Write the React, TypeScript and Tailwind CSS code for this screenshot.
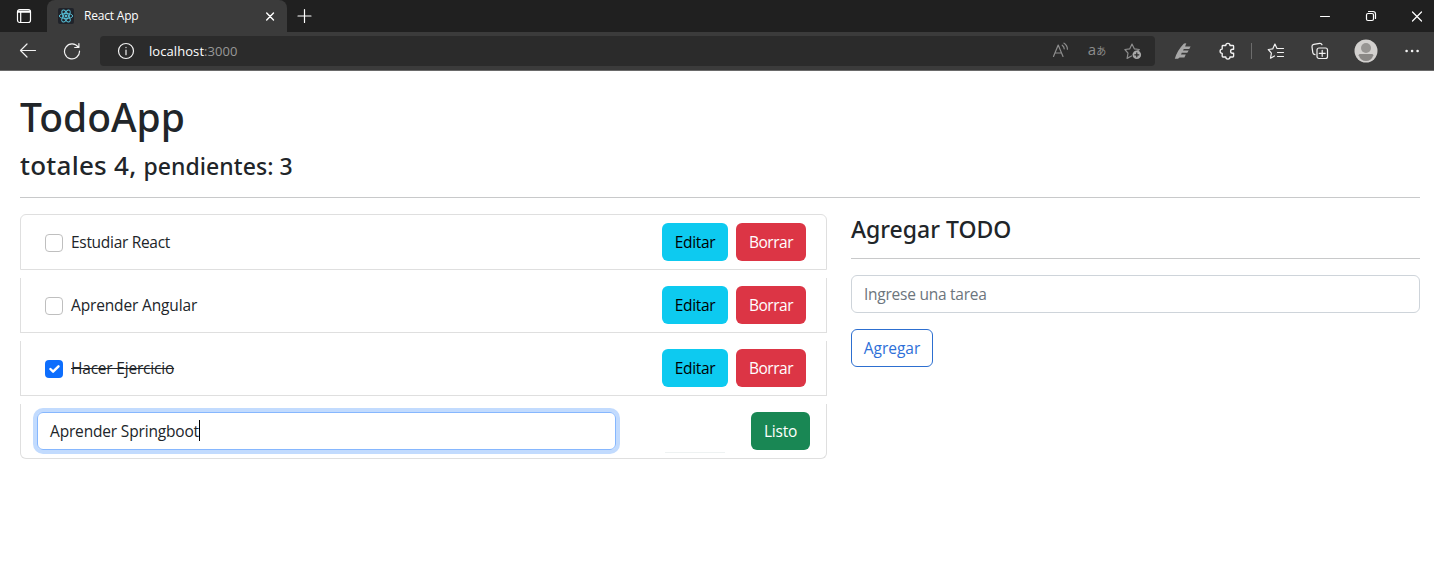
import type { ReactNode } from "react";

const line = { fill: "none", stroke: "currentColor", strokeWidth: 1.2, strokeLinecap: "round", strokeLinejoin: "round" } as const;

function Icon({ size = 18, children, className = "" }: { size?: number; children: ReactNode; className?: string }) {
  return (
    <svg width={size} height={size} viewBox={`0 0 ${size} ${size}`} className={`block shrink-0 ${className}`} {...line}>
      {children}
    </svg>
  );
}

function TabStrip() {
  return (
    <div className="flex h-8 bg-[#202020] text-white">
      <div className="flex w-[47px] items-center pl-4">
        <Icon size={16}>
          <rect x="1.5" y="1.5" width="13" height="13" rx="2.2" />
          <path d="M1.5 4.2h13M2 3h12M4.7 4.5v10" />
        </Icon>
      </div>
      <div className="flex h-8 w-60 items-center rounded-t-lg bg-[#3b3b3b] pl-[11px] pr-[10px]">
        <svg width="16" height="16" viewBox="0 0 16 16" className="block rounded-[2px] bg-[#20232a]" fill="none" stroke="#58c4dc" strokeWidth="0.9">
          <ellipse cx="8" cy="8" rx="6.7" ry="2.6" />
          <ellipse cx="8" cy="8" rx="6.7" ry="2.6" transform="rotate(60 8 8)" />
          <ellipse cx="8" cy="8" rx="6.7" ry="2.6" transform="rotate(120 8 8)" />
          <circle cx="8" cy="8" r="1" fill="#58c4dc" />
        </svg>
        <span className="ml-[10px] grow text-[12px] leading-4 tracking-[-0.2px]">React App</span>
        <Icon size={14}>
          <path d="M3.7 4l6.8 7M10.5 4l-6.8 7" strokeWidth="1.4" />
        </Icon>
      </div>
      <div className="flex grow items-center pl-[10px]">
        <Icon size={16}>
          <path d="M7.5 1.5v13M1 8h13" />
        </Icon>
      </div>
      <div className="flex items-center gap-8 pr-[10px]">
        <Icon size={14}>
          <path d="M2.5 7.5h9" strokeWidth="1" />
        </Icon>
        <Icon size={14}>
          <rect x="2.5" y="4.5" width="7" height="7" rx="1.5" />
          <path d="M4.5 2.5h4.5a2.5 2.5 0 0 1 2.5 2.5v4.5" />
        </Icon>
        <Icon size={14}>
          <path d="M2.5 3l9 9M11.5 3l-9 9" />
        </Icon>
      </div>
    </div>
  );
}

function Toolbar() {
  return (
    <div className="flex h-[39px] items-center border-b border-[#6a6a6a] bg-[#3b3b3b] text-[#f2f2f2]">
      <div className="flex w-[100px] items-center gap-[26px] pl-[19px]">
        <Icon>
          <path d="M16.5 8.5h-15M8 2L1.5 8.5 8 15" />
        </Icon>
        <Icon>
          <path d="M15.2 5.2A7.5 7.5 0 1 0 16.5 9M15.9 1.5v4h-4.2" />
        </Icon>
      </div>
      <div className="flex h-[30px] w-[1055px] items-center rounded bg-[#2b2b2b] pl-[17px] pr-[13px]">
        <Icon>
          <circle cx="9" cy="9" r="7.5" />
          <path d="M9 8v4.7M9 5.4v.2" />
        </Icon>
        <span className="ml-[14px] grow text-[13px] leading-5 tracking-[0.07px] text-white">
          localhost<span className="text-[#989898]">:3000</span>
        </span>
        <div className="flex items-center gap-[18px] text-[#8d8d8d]">
          <Icon>
            <path d="M1.5 14.5L6.2 3l4.8 11.5M3 11h6.5M10.2 3.2q2 1.4 2 3.6M12 1.2q3.4 2.2 3.4 6" />
          </Icon>
          <span className="flex w-[18px] items-baseline justify-center pb-[2px] text-[15px] leading-[18px]">
            a<span className="text-[10px]">あ</span>
          </span>
          <Icon>
            <path d="M7.5 14l-4.4 2.4.9-5.2L.9 7.5l4.9-.7L8 2.1l2.3 4.7 5 .7-2 1.8" />
            <circle cx="12.8" cy="12.8" r="4.3" fill="#a8a8a8" stroke="none" />
            <path d="M12.8 10.8v4M10.8 12.8h4" stroke="#2b2b2b" />
          </Icon>
        </div>
      </div>
      <div className="flex grow items-center pl-[19px]">
        <svg width="18" height="18" viewBox="0 0 18 18" className="block text-[#a7a7a7]" fill="currentColor">
          <path d="M.8 16.8Q3 8.5 10 1.4l2.3-.2-1.2 3.4h5.5L15.3 7H9.8L9 8.6h5.7l-1.4 2.2H7.8L7 12.5h4.8l-1.4 2.9H5.6L4 16.8z" />
        </svg>
        <Icon className="ml-[26px]">
          <path
            d="M5 3.5h2.8a2.1 2.1 0 0 1 4.2 0h2.8a.8.8 0 0 1 .8.8v2.9h-1a2 2 0 0 0 0 4h1v3a.8.8 0 0 1-.8.8H12a2.1 2.1 0 0 1-4.2 0H5a.8.8 0 0 1-.8-.8v-2.9a2.1 2.1 0 0 1 0-4.2V4.3a.8.8 0 0 1 .8-.8z"
            strokeWidth="1.35"
          />
        </Icon>
        <div className="ml-[15px] h-4 w-px bg-[#6c6c6c]" />
        <Icon className="ml-[15px]">
          <path d="M7.5 14l-4 2.2.9-5L1.3 7.5l4.4-.6 2.2-4.8 2.1 4.4h6.5M10.5 10.5h6M10.5 14.5h6" />
        </Icon>
        <Icon className="ml-[26px]">
          <path d="M4 12.6q-2-.3-2.2-2L1 4.8q-.2-2 1.7-2.4L8.7 1.3q1.7-.2 2.3 1.5" />
          <rect x="6" y="6" width="10.5" height="10.5" rx="2" />
          <path d="M11.2 8.3v6M8.2 11.3h6" />
        </Icon>
        <svg width="24" height="24" viewBox="0 0 24 24" className="ml-[25px] block">
          <circle cx="12" cy="12" r="11.5" fill="#d2d0ce" />
          <circle cx="12" cy="9" r="5" fill="#979593" />
          <path d="M4.7 16.2q0-1.2 1.4-1.2h11.8q1.4 0 1.4 1.2Q17.5 22 12 22t-7.3-5.8z" fill="#8a8886" />
        </svg>
        <Icon className="ml-[25px]">
          <path d="M3.5 9h.2M9 9h.2M14.5 9h.2" strokeWidth="2.4" />
        </Icon>
      </div>
    </div>
  );
}

function Check({ checked }: { checked: boolean }) {
  return checked ? (
    <span className="mt-px flex size-[18px] items-center justify-center rounded bg-[#0d6efd]">
      <svg width="18" height="18" viewBox="0 0 20 20" fill="none" stroke="#fff" strokeWidth="2.7" strokeLinecap="round" strokeLinejoin="round">
        <path d="M6 10l3 3 6-6" />
      </svg>
    </span>
  ) : (
    <span className="mt-px size-[18px] rounded border border-[#bfbfbf] bg-white" />
  );
}

const todos = [
  { text: "Estudiar React", done: false, label: "tracking-[-0.3px]" },
  { text: "Aprender Angular", done: false, label: "tracking-[-0.15px]" },
  { text: "Hacer Ejercicio", done: true, label: "line-through tracking-[-0.2px]" },
];

function TodoRow({ text, done, label, first }: { text: string; done: boolean; label: string; first: boolean }) {
  return (
    <li className={`flex items-center border-x border-b border-[#dfdfdf] py-2 pl-6 pr-5 ${first ? "rounded-t-md border-t" : ""}`}>
      <Check checked={done} />
      <span className={`ml-2 grow ${label}`}>{text}</span>
      <button className="h-[38px] w-[66px] rounded-md bg-[#0dcaf0] text-black tracking-[-0.3px]">Editar</button>
      <button className="ml-2 h-[38px] w-[70px] rounded-md bg-[#dc3545] text-white tracking-[-0.5px]">Borrar</button>
    </li>
  );
}

export default function App() {
  return (
    <div className="h-[580px] overflow-hidden bg-white font-['Open_Sans','Noto_Sans_CJK_JP',sans-serif] text-[15.5px] leading-6 text-[#212529]">
      <header className="w-[1434px]">
        <TabStrip />
        <Toolbar />
      </header>
      <main className="px-5 pt-[22px]">
        <h1 className="font-['Noto_Sans',sans-serif] text-[39px] font-medium leading-[48px]">TodoApp</h1>
        <h3 className="mt-[7px] font-['Noto_Sans',sans-serif] text-[26px] font-medium leading-[34px] tracking-[0.25px]">
          totales 4, <small className="text-[23px] tracking-[0.05px]">pendientes: 3</small>
        </h3>
        <hr className="mt-[14px] border-[#c8c9ca]" />
        <div className="mt-4 flex gap-6">
          <ul className="flex w-[807px] flex-col gap-2">
            {todos.map((t, i) => (
              <TodoRow key={t.text} {...t} first={i === 0} />
            ))}
            <li className="flex items-center justify-between rounded-b-md border-x border-b border-[#dfdfdf] px-4 py-2">
              <div className="flex h-[38px] w-[579px] items-center rounded-md border border-[#86b7fe] px-3 ring-4 ring-[#c2dbfe]">
                <span className="tracking-[-0.17px]">Aprender Springboot</span>
                <span className="mb-0.5 h-[21px] w-px bg-black" />
              </div>
              <div className="flex">
                <span className="mr-[26px] h-px w-[60px] translate-y-10 bg-[#eef2f2]" />
                <button className="h-[38px] w-[59px] rounded-md bg-[#198754] text-white tracking-[-0.2px]">Listo</button>
              </div>
            </li>
          </ul>
          <section className="w-[569px]">
            <h4 className="pt-px font-['Noto_Sans',sans-serif] text-[23px] font-medium leading-7">Agregar TODO</h4>
            <hr className="mt-[15px] border-[#c8c9ca]" />
            <input
              placeholder="Ingrese una tarea"
              className="mt-4 block h-[38px] w-full rounded-md border border-[#ced4da] px-3 tracking-[-0.25px] placeholder:text-[#6c757d]"
            />
            <button className="mt-4 h-[38px] w-[82px] rounded-md border border-[#2d6fd0] text-[#2d6fd8] tracking-[0px]">Agregar</button>
          </section>
        </div>
      </main>
    </div>
  );
}
